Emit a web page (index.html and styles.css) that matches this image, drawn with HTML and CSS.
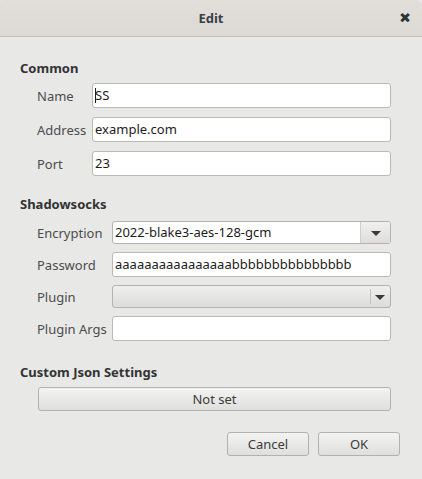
FILE: index.html
```html
<!DOCTYPE html>
<html>
<head>
<meta charset="utf-8">
<link rel="stylesheet" href="styles.css">
</head>
<body>
<div class="dialog">
  <div class="titlebar">
    <span class="title">Edit</span>
    <span class="close">&#x2715;</span>
  </div>
  <div class="content">
    <div class="heading h-common">Common</div>
    <div class="grid common">
      <div class="label">Name</div>
      <div class="field"><span class="caret"></span>SS</div>
      <div class="label">Address</div>
      <div class="field">example.com</div>
      <div class="label">Port</div>
      <div class="field">23</div>
    </div>
    <div class="heading h-ss">Shadowsocks</div>
    <div class="grid ss">
      <div class="label">Encryption</div>
      <div class="combo">
        <span class="combo-text">2022-blake3-aes-128-gcm</span>
        <span class="combo-btn"><span class="arrow"></span></span>
      </div>
      <div class="label">Password</div>
      <div class="field">aaaaaaaaaaaaaaaabbbbbbbbbbbbbbb</div>
      <div class="label">Plugin</div>
      <div class="combo ro">
        <span class="combo-text"></span>
        <span class="combo-btn"><span class="sep"></span><span class="arrow"></span></span>
      </div>
      <div class="label">Plugin Args</div>
      <div class="field"></div>
    </div>
    <div class="heading h-json">Custom Json Settings</div>
    <div class="btn wide">Not set</div>
    <div class="actions">
      <div class="btn">Cancel</div>
      <div class="btn">OK</div>
    </div>
  </div>
</div>
</body>
</html>
```
FILE: styles.css
```css
html, body {
  margin: 0;
  padding: 0;
  background: #e8e8e7;
}
body {
  font-family: "Noto Sans", "Open Sans", sans-serif;
  font-size: 13px;
  color: #3c3c3c;
  width: 422px;
  height: 479px;
  overflow: hidden;
}
.dialog {
  display: flex;
  flex-direction: column;
  height: 479px;
}
.titlebar {
  height: 36px;
  border-bottom: 1px solid #c3bcb2;
  background: linear-gradient(#e2dfdb, #dcd9d5);
  border-top-right-radius: 6px;
  border-top-left-radius: 2px;
  display: flex;
  align-items: center;
  justify-content: center;
  position: relative;
}
.title {
  font-weight: bold;
  font-size: 13px;
  color: #3a3f44;
}
.close {
  position: absolute;
  right: 12px;
  top: 10px;
  font-size: 12px;
  font-weight: bold;
  color: #2e3436;
  line-height: 16px;
  -webkit-text-stroke: 1.2px #2e3436;
}
.content {
  padding: 0 22px 0 20px;
  display: flex;
  flex-direction: column;
}
.heading {
  font-weight: bold;
  color: #333;
  height: 18px;
  line-height: 18px;
}
.h-common { margin-top: 22px; }
.h-ss { margin-top: 19px; }
.h-json { margin-top: 22px; }
.grid {
  display: grid;
  align-items: center;
  padding-left: 17px;
  color: #4c4c4c;
}
.common {
  grid-template-columns: 55px 299px;
  grid-auto-rows: 25px;
  row-gap: 9px;
  margin-top: 6px;
}
.ss {
  grid-template-columns: 75px 279px;
  grid-auto-rows: 25px;
  row-gap: 7px;
  margin-top: 7px;
}
.field {
  height: 25px;
  box-sizing: border-box;
  background: #fff;
  border: 1px solid #bab9b6;
  border-radius: 3px;
  padding-left: 2px;
  line-height: 23px;
  color: #1c1c1c;
  white-space: nowrap;
  overflow: hidden;
  position: relative;
}
.caret {
  display: inline-block;
  width: 1px;
  height: 15px;
  background: #1c1c1c;
  vertical-align: -3px;
  margin-right: -1px;
}
.combo {
  height: 23px;
  box-sizing: border-box;
  border: 1px solid #b4b3b0;
  border-radius: 3px;
  display: flex;
  overflow: hidden;
  background: #fff;
}
.combo-text {
  flex: 1;
  padding-left: 2px;
  line-height: 21px;
  color: #1c1c1c;
}
.combo-btn {
  width: 29px;
  border-left: 1px solid #cfcfcd;
  background: linear-gradient(#f0f0ef, #dedddb);
  display: flex;
  align-items: center;
  justify-content: center;
  position: relative;
}
.combo.ro {
  background: linear-gradient(#efefee, #dcdcda);
}
.combo.ro .combo-btn {
  background: none;
  border-left: none;
  width: 20px;
}
.sep {
  position: absolute;
  left: 0;
  top: 3px;
  bottom: 3px;
  width: 1px;
  background: #c4c4c2;
}
.arrow {
  width: 0;
  height: 0;
  border-left: 5px solid transparent;
  border-right: 5px solid transparent;
  border-top: 5px solid #3a3a3a;
  margin-top: 1px;
}
.btn {
  height: 24px;
  box-sizing: border-box;
  border: 1px solid #b2b1ae;
  border-radius: 3px;
  background: linear-gradient(#f3f3f2, #dfdfdd);
  color: #3c3c3c;
  display: flex;
  align-items: center;
  justify-content: center;
}
.wide {
  margin-top: 6px;
  margin-left: 18px;
  width: 353px;
}
.actions {
  display: flex;
  justify-content: flex-end;
  gap: 9px;
  margin-top: 21px;
}
.actions .btn {
  width: 82px;
}
```
